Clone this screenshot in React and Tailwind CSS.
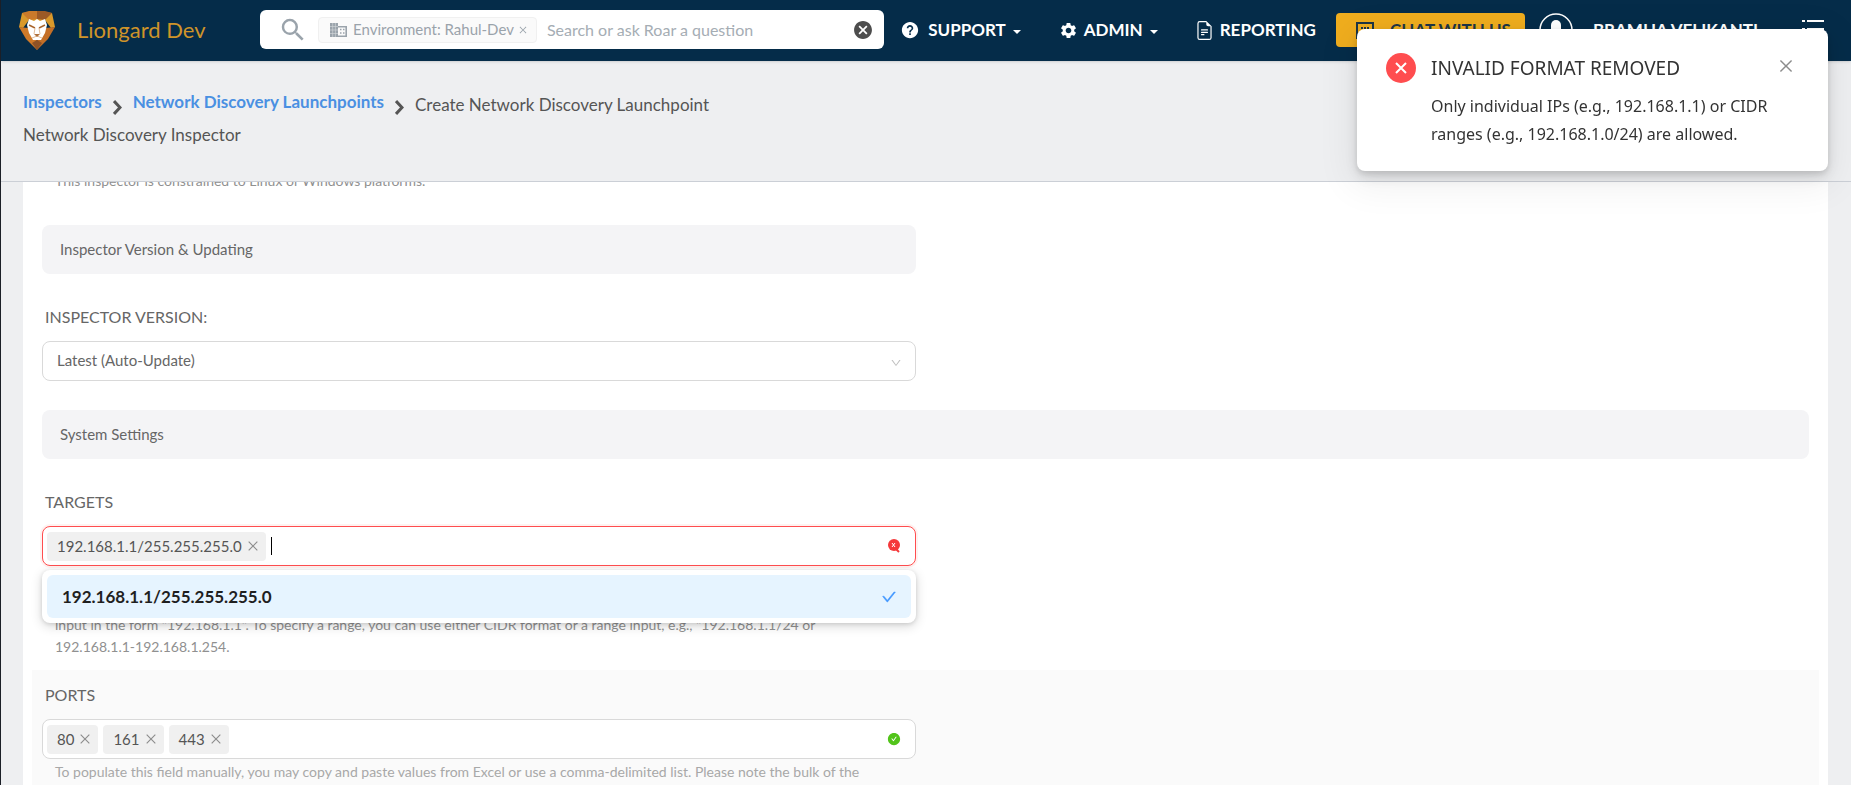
import { useState } from 'react';
import { AiFillCheckCircle, AiOutlineCheck, AiOutlineClose, AiOutlineDown } from 'react-icons/ai';
import { BsFileEarmarkText } from 'react-icons/bs';
import { IoMdCloseCircle, IoMdHelpCircle } from 'react-icons/io';
import { MdSearch, MdSettings } from 'react-icons/md';

const TARGETS = ['192.168.1.1/255.255.255.0'];
const PORTS = ['80', '161', '443'];

export default function App() {
  const [toastOpen, setToastOpen] = useState(true);

  return (
    <div className="flex h-screen flex-col overflow-hidden border-l border-[#1b1f27] bg-[#eeeff1] font-[Lato,sans-serif] text-[#555]">
      <Header />
      <Breadcrumbs />

      <main className="min-h-0 flex-1 overflow-hidden px-[22px] pr-[23px]">
        <div className="-mt-3 min-h-full bg-white px-[9px] pb-10">
          <div className="px-[10px]">
            <p className="px-[13px] text-sm leading-[22px] text-[#909090]">
              This inspector is constrained to Linux or Windows platforms.
            </p>

            <div className="mt-[33px] grid grid-cols-2 gap-5">
              <div>
                <SectionTitle>Inspector Version &amp; Updating</SectionTitle>
                <FieldLabel htmlFor="version">INSPECTOR VERSION:</FieldLabel>
                <div className="relative">
                  <select
                    id="version"
                    className="h-10 w-full appearance-none rounded-lg border border-[#d9d9d9] bg-white px-3.5 pb-0.5 text-[15px] text-[#666] outline-none"
                  >
                    <option>Latest (Auto-Update)</option>
                  </select>
                  <AiOutlineDown className="pointer-events-none absolute top-4 right-3.5 size-3 text-[#bfbfbf]" />
                </div>
              </div>
            </div>

            <div className="mt-[29px]">
              <SectionTitle>System Settings</SectionTitle>
            </div>
          </div>

          <div className="grid grid-cols-2 gap-5 px-[10px] pb-3">
            <div>
              <FieldLabel htmlFor="targets">TARGETS</FieldLabel>
              <div className="relative">
                <TagField id="targets" tags={TARGETS} invalid />
                <TargetMenu />
              </div>
              {/* the open menu hides the start of the hint */}
              <p className="pt-12 pr-[22px] pl-[13px] text-sm leading-[22px] text-[#909090]">
                input in the form &quot;192.168.1.1&quot;. To specify a range, you can use either CIDR format or a range
                input, e.g., &quot;192.168.1.1/24 or
                <br />
                192.168.1.1-192.168.1.254.
              </p>
            </div>
          </div>

          <div className="grid grid-cols-2 gap-5 bg-[#fafafa] px-[10px] pb-10">
            <div className="-mt-[18px]">
              <FieldLabel htmlFor="ports">PORTS</FieldLabel>
              <TagField id="ports" tags={PORTS} />
              <p className="pt-0.5 pr-[22px] pl-[13px] text-sm leading-[22px] text-[#a8a8a8]">
                To populate this field manually, you may copy and paste values from Excel or use a comma-delimited list.
                Please note the bulk of the
              </p>
            </div>
          </div>
        </div>
      </main>

      {toastOpen && <Toast onClose={() => setToastOpen(false)} />}
    </div>
  );
}

function Header() {
  return (
    <header className="z-10 flex h-[61px] shrink-0 items-start bg-[#052c49] pr-[27px] pl-[18px] text-white shadow-sm">
      <LionLogo />
      <span className="mt-[14px] ml-[22px] w-[183px] text-[22px] leading-8 text-[#cf9429]">Liongard Dev</span>

      <div className="mt-[10px] flex h-[39px] min-w-0 flex-1 items-center rounded-md bg-white pr-2.5 pl-[18px] text-[#9aa3ab]">
        <MdSearch className="size-[30px] shrink-0" />
        <span className="ml-[10px] flex h-[26px] shrink-0 items-center rounded border border-[#f0f0f0] bg-[#fafafa] pr-2 pl-[11px] text-[15px]">
          <BuildingIcon />
          Environment: Rahul-Dev
          <button type="button" aria-label="Remove environment" className="ml-1">
            <AiOutlineClose className="size-2.5" />
          </button>
        </span>
        <input
          type="text"
          aria-label="Search"
          placeholder="Search or ask Roar a question"
          className="ml-[10px] min-w-0 flex-1 bg-transparent text-base outline-none placeholder:text-[#a5adb4]"
        />
        <button type="button" aria-label="Clear search">
          <IoMdCloseCircle className="size-[22px] text-[#4d4d4d]" />
        </button>
      </div>

      <nav className="mt-[13px] flex h-[34px] shrink-0 items-center text-[17px] font-bold">
        <button type="button" className="ml-4 flex items-center">
          <IoMdHelpCircle className="mr-2 size-5" />
          SUPPORT
          <Caret />
        </button>
        <button type="button" className="ml-[38px] flex items-center">
          <MdSettings className="mr-1.5 size-[19px]" />
          ADMIN
          <Caret />
        </button>
        <a href="#reporting" className="ml-[37px] flex items-center">
          <BsFileEarmarkText className="mr-1.5 size-[19px]" />
          REPORTING
        </a>
        <button type="button" className="ml-5 flex h-[34px] items-center rounded bg-[#efad1e] pr-3.5 pl-5 text-[#1d3546]">
          <ChatIcon />
          <span className="ml-4">CHAT WITH US</span>
        </button>
        <button type="button" className="ml-3.5 flex items-center">
          <AvatarIcon />
          <span className="ml-5">BRAMHA VELIKANTI</span>
        </button>
        <button type="button" aria-label="Menu" className="ml-11">
          <ListIcon />
        </button>
      </nav>
    </header>
  );
}

function Breadcrumbs() {
  return (
    <div className="z-[5] h-[121px] shrink-0 border-b border-[#cbcfd6] bg-[#eeeff1] px-[22px] pt-7 text-[17px]">
      <nav className="flex h-8 items-center">
        <a href="#inspectors" className="pb-1.5 font-bold text-[#4a90e2]">Inspectors</a>
        <Separator />
        <a href="#launchpoints" className="pb-1.5 font-bold text-[#4a90e2]">Network Discovery Launchpoints</a>
        <Separator />
        <span>Create Network Discovery Launchpoint</span>
      </nav>
      <p className="leading-7">Network Discovery Inspector</p>
    </div>
  );
}

function SectionTitle({ children }) {
  return <h2 className="h-[49px] rounded-lg bg-[#f4f4f6] px-[18px] text-[15px] leading-[49px] text-[#666]">{children}</h2>;
}

function FieldLabel({ htmlFor, children }) {
  return (
    <label htmlFor={htmlFor} className="block px-[3px] pt-8 pb-3.5 text-base leading-[21px] text-[#666]">
      {children}
    </label>
  );
}

function TagField({ id, tags, invalid }) {
  return (
    <div
      className={`flex h-10 items-center gap-[5px] rounded-lg border bg-white pr-3.5 pl-1 ${
        invalid ? 'border-[#ff4d4f] shadow-[0_0_0_2px_rgba(255,38,5,0.06)]' : 'border-[#d9d9d9]'
      }`}
    >
      {tags.map((tag) => (
        <span key={tag} className="flex h-[29px] items-center rounded bg-[#f0f0f0] pr-1.5 pl-2.5 text-[15px]">
          {tag}
          <button type="button" aria-label={`Remove ${tag}`} className="ml-1">
            <AiOutlineClose className="size-3.5 text-[#8c8c8c]" />
          </button>
        </span>
      ))}
      {invalid && <span className="h-[18px] w-px bg-black" />}
      <input id={id} type="text" className="min-w-0 flex-1 bg-transparent text-[15px] outline-none" />
      {invalid ? <ErrorSearchIcon /> : <AiFillCheckCircle className="size-3.5 text-[#52c41a]" />}
    </div>
  );
}

function TargetMenu() {
  return (
    <div
      role="listbox"
      aria-label="Targets"
      className="absolute inset-x-0 top-full z-[2] mt-1 rounded-lg bg-white p-[5px] shadow-[0_3px_12px_rgba(0,0,0,0.16),0_1px_4px_rgba(0,0,0,0.12)]"
    >
      {TARGETS.map((target) => (
        <div
          key={target}
          role="option"
          aria-selected="true"
          className="flex h-[43px] items-center justify-between rounded-md bg-[#e6f4ff] pr-3.5 pl-[15px] text-[17px] font-bold text-[#1f1f1f]"
        >
          {target}
          <AiOutlineCheck className="size-4 text-[#4096ff]" strokeWidth="30" />
        </div>
      ))}
    </div>
  );
}

function Toast({ onClose }) {
  return (
    <div
      role="alert"
      className="fixed top-[29px] right-[23px] z-20 flex w-[471px] items-start rounded-lg bg-white px-[29px] pt-6 pb-[23px] font-['Noto_Sans',sans-serif] text-[#333] shadow-[0_6px_16px_rgba(0,0,0,0.1),0_3px_6px_rgba(0,0,0,0.12),0_9px_36px_8px_rgba(0,0,0,0.06)]"
    >
      <span className="flex size-[30px] shrink-0 items-center justify-center rounded-full bg-[#ff4d4f] text-white">
        <svg width="12" height="12" viewBox="0 0 12 12" fill="none" stroke="currentColor" strokeWidth="2">
          <path d="M1 1L11 11M11 1L1 11" />
        </svg>
      </span>
      <div className="ml-[15px] flex-1">
        <h3 className="text-[19px] leading-[31px]">INVALID FORMAT REMOVED</h3>
        <p className="mt-2 text-base leading-7 whitespace-nowrap">
          Only individual IPs (e.g., 192.168.1.1) or CIDR
          <br />
          ranges (e.g., 192.168.1.0/24) are allowed.
        </p>
      </div>
      <button type="button" aria-label="Close" onClick={onClose} className="mt-1 mr-1 text-[#8c8c8c]">
        <AiOutlineClose className="size-[18px]" />
      </button>
    </div>
  );
}

function Separator() {
  return (
    <svg width="9" height="15" viewBox="0 0 9 15" className="mx-[11px] mt-1" fill="none" stroke="currentColor" strokeWidth="3">
      <path d="M1 1L7 7.5L1 14" />
    </svg>
  );
}

function Caret() {
  return (
    <svg width="8" height="4" viewBox="0 0 8 4" className="mt-1 ml-[7px]">
      <path d="M0 0H8L4 4Z" fill="currentColor" />
    </svg>
  );
}

function BuildingIcon() {
  return (
    <svg width="17" height="14" viewBox="0 0 17 14" className="mr-1.5">
      <path d="M0 0H8V14H0Z" fill="currentColor" />
      <path d="M0 3.5H8M0 7H8M0 10.5H8M2.7 0V14M5.4 0V14" stroke="#fff" strokeWidth="0.6" opacity="0.6" />
      <path d="M8 3.7H16.2V13.2H8" fill="none" stroke="currentColor" strokeWidth="1.6" />
      <path d="M10 6.5H11.5M13 6.5H14.5M10 10H11.5M13 10H14.5" stroke="currentColor" strokeWidth="1.6" />
    </svg>
  );
}

function LionLogo() {
  return (
    <svg width="36" height="40" viewBox="0 0 36 40" className="mt-[11px] shrink-0">
      <path d="M3 2L18 0V14L10 9L4 17L0 16Z" fill="#d9992b" />
      <path d="M33 2L18 0V14L26 9L32 17L36 16Z" fill="#d9992b" />
      <path d="M3 2L10 0H18V8L10 9Z" fill="#c97a2b" />
      <path d="M33 2L26 0H18V8L26 9Z" fill="#9c5a26" />
      <path d="M0 16L9 17L18 30V39L7 28Z" fill="#cf7a29" />
      <path d="M36 16L27 17L18 30V39L29 28Z" fill="#c46f27" />
      <path d="M13 32L18 29L23 32L18 39Z" fill="#8f5225" />
      <path d="M10 8L15 10L18 8L21 10L26 8L28 14L26 22L22 29H14L10 22L8 14Z" fill="#fff" />
      <path d="M10 14L16 17M26 14L20 17" stroke="#a8642c" strokeWidth="1.5" />
      <path d="M16 17L15 23M20 17L21 23M13 27L18 25L23 27" stroke="#e3bd9a" fill="none" />
      <path d="M15 23H21L18 26Z" fill="#b0713d" />
    </svg>
  );
}

function ChatIcon() {
  return (
    <svg width="18" height="18" viewBox="0 0 18 18" fill="none" stroke="currentColor" strokeWidth="2">
      <path d="M1 17V2H17V13H5Z" />
      <path d="M5 7H7M8 7H10M11 7H13" />
    </svg>
  );
}

function AvatarIcon() {
  return (
    <svg width="34" height="34" viewBox="0 0 34 34">
      <circle cx="17" cy="17" r="16" fill="none" stroke="currentColor" strokeWidth="1.5" />
      <rect x="12" y="7" width="10" height="14" rx="5" fill="currentColor" />
      <path d="M7 27C9 22 25 22 27 27L17 32Z" fill="currentColor" />
    </svg>
  );
}

function ListIcon() {
  return (
    <svg width="22" height="22" viewBox="0 0 22 22" fill="none" stroke="currentColor" strokeWidth="2">
      <path d="M0 2H3M5 2H22M0 10H3M5 10H22M0 18H3M5 18H22" />
    </svg>
  );
}

function ErrorSearchIcon() {
  return (
    <svg width="14" height="14" viewBox="0 0 14 14">
      <circle cx="7" cy="6" r="6" fill="#f5383a" />
      <path d="M9 10L12 13" stroke="#f5383a" strokeWidth="2" />
      <path d="M5 4L8 8M8 4L5 8" stroke="#fff" />
    </svg>
  );
}
